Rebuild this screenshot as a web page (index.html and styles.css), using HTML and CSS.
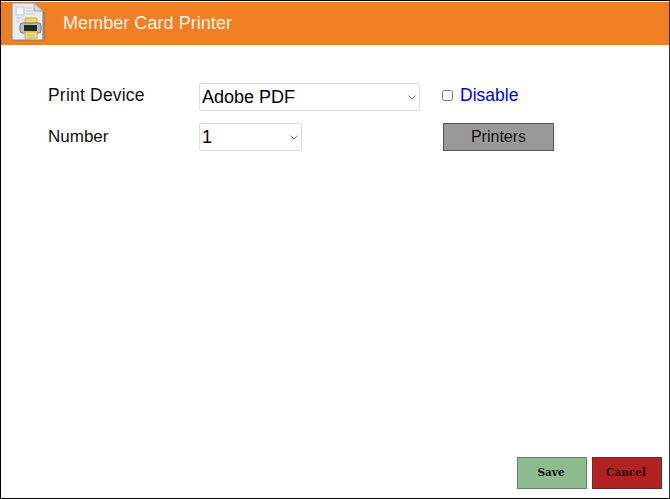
FILE: index.html
```html
<!DOCTYPE html>
<html lang="en">
<head>
    <meta charset="UTF-8">
    <meta name="viewport" content="width=device-width, initial-scale=1.0">
    <title>Member Card Printer</title>
    <link rel="stylesheet" href="styles.css">
</head>
<body>
    <div class="window">
        <div class="title-bar">
            <svg class="title-icon" width="35" height="40" viewBox="0 0 35 40">
                <path d="M2 2H24L34 11V39H2Z" fill="#a8642c" opacity="0.6"/>
                <path d="M1 1H23L32 9V38H1Z" fill="#e9ebee" stroke="#8c8f93" stroke-width="1.200"/>
                <path d="M23 1V9H32Z" fill="#d5d8dc" stroke="#a5a8ac"/>
                <path d="M5 5H13V13H5Z" fill="#f4f5f7" stroke="#c3c9d2" stroke-width="1.200"/>
                <path d="M15 6H21M15 9H22M15 12H24M5 16H12M5 19H9" stroke="#c4cad3" stroke-width="1.200"/>
                <path d="M14 16H26V22H14Z" fill="#f2d564" stroke="#cdb24a"/>
                <rect x="9" y="21" width="21" height="10" rx="2.500" fill="#b9bbbd" stroke="#76787a"/>
                <rect x="13" y="23" width="13" height="6" fill="#262626"/>
                <path d="M14 30H26V37H14Z" fill="#f3dc7d" stroke="#cdb24a"/>
                <path d="M16 33H24M16 35H24" stroke="#d9bf57"/>
            </svg>
            <span class="title-text">Member Card Printer</span>
        </div>

        <div class="form">
            <label class="field-label">Print Device</label>
            <div class="select-wrap wide">
                <select class="field-select">
                    <option>Adobe PDF</option>
                </select>
                <svg class="chevron" width="8" height="5" viewBox="0 0 8 5"><path d="M0.500 0.500L4 4L7.500 0.500" fill="none" stroke="#777"/></svg>
            </div>
            <label class="disable-option">
                <input type="checkbox" class="disable-check">
                <span>Disable</span>
            </label>

            <label class="field-label number-label">Number</label>
            <div class="select-wrap narrow">
                <select class="field-select">
                    <option>1</option>
                </select>
                <svg class="chevron" width="8" height="5" viewBox="0 0 8 5"><path d="M0.500 0.500L4 4L7.500 0.500" fill="none" stroke="#777"/></svg>
            </div>
            <button class="printers-btn">Printers</button>
        </div>

        <div class="actions">
            <button class="action-btn save">Save</button>
            <button class="action-btn cancel">Cancel</button>
        </div>
    </div>
</body>
</html>
```
FILE: styles.css
```css
* { box-sizing: border-box; }
body {
    margin: 0;
    font-family: "Liberation Sans", Arial, sans-serif;
    background: white;
}
.window {
    width: 670px;
    height: 499px;
    border: 1px solid #000;
    border-right-color: #333;
    padding-top: 1px;
    display: flex;
    flex-direction: column;
}
.title-bar {
    height: 43px;
    background: #f07f23;
    display: flex;
    align-items: center;
    padding-left: 10px;
}
.title-icon { flex: none; margin-top: -3px; }
.title-text {
    color: #fdf3e9;
    font-size: 18px;
    letter-spacing: 0.050px;
    margin-left: 17px;
}
.form {
    display: grid;
    grid-template-columns: 151px 221px 1fr;
    grid-auto-rows: 28px;
    row-gap: 12px;
    align-items: center;
    padding: 38px 0 0 47px;
}
.field-label {
    font-size: 17.500px;
    letter-spacing: 0.200px;
    color: #111;
    padding-bottom: 3px;
}
.number-label {
    font-size: 17px;
    letter-spacing: 0;
    padding-bottom: 1px;
}
.select-wrap {
    position: relative;
    height: 28px;
}
.select-wrap.wide { width: 221px; }
.select-wrap.narrow { width: 103px; }
.field-select {
    appearance: none;
    width: 100%;
    height: 100%;
    border: 1px solid #dcdcdc;
    border-radius: 2px;
    background: #fff;
    padding: 0 0 0 2px;
    font-family: inherit;
    font-size: 18px;
    color: #000;
}
.chevron {
    position: absolute;
    right: 4px;
    top: 12px;
    pointer-events: none;
}
.disable-option {
    display: flex;
    align-items: center;
    margin-left: 22px;
    color: #0000ee;
    font-size: 17.500px;
    padding-bottom: 4px;
}
.disable-check {
    width: 11px;
    height: 11px;
    margin: 1px 7px 0 0;
}
.printers-btn {
    width: 111px;
    height: 28px;
    margin-left: 23px;
    background: #999;
    border: 1px solid #555;
    padding: 0;
    font-family: inherit;
    font-size: 16px;
    color: #111;
}
.actions {
    margin-top: auto;
    display: flex;
    justify-content: flex-end;
    gap: 5px;
    padding: 0 7px 9px 0;
}
.action-btn {
    width: 70px;
    height: 32px;
    padding: 0 2px 2px 0;
    font-family: "DejaVu Serif", serif;
    font-weight: bold;
    font-size: 10.500px;
    color: #111;
}
.save { background: #8fbc8f; border: 1px solid #62836a; }
.cancel { background: #b22222; border: 1px solid #6e2a2a; color: #2a0505; }
```
